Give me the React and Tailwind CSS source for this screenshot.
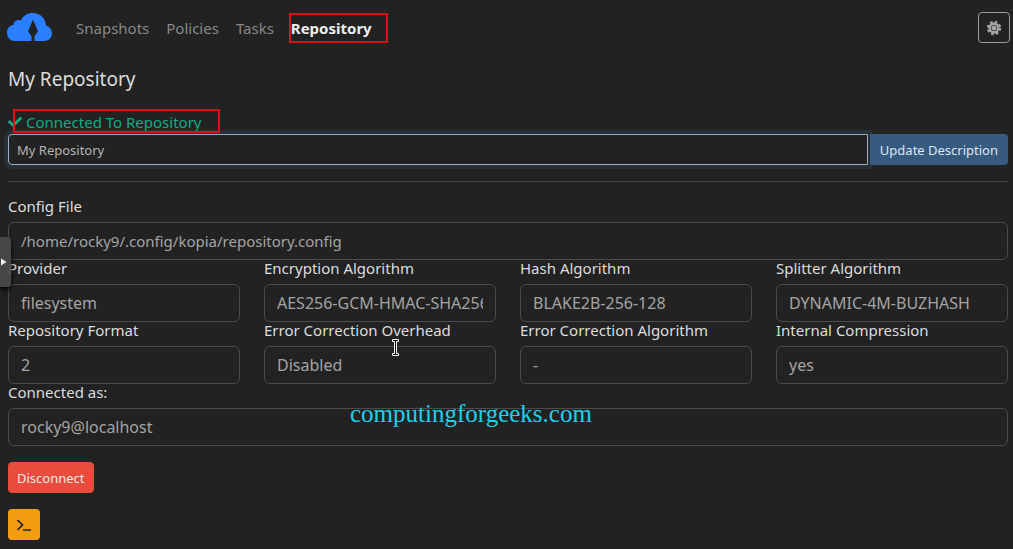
import { FaCheck } from "react-icons/fa";

const navLinks = ["Snapshots", "Policies", "Tasks"];

const details = [
  { id: "provider", label: "Provider", value: "filesystem" },
  { id: "encryption", label: "Encryption Algorithm", value: "AES256-GCM-HMAC-SHA256" },
  { id: "hash", label: "Hash Algorithm", value: "BLAKE2B-256-128" },
  { id: "splitter", label: "Splitter Algorithm", value: "DYNAMIC-4M-BUZHASH" },
  { id: "format", label: "Repository Format", value: "2" },
  { id: "eccOverhead", label: "Error Correction Overhead", value: "Disabled" },
  { id: "eccAlgorithm", label: "Error Correction Algorithm", value: "-" },
  { id: "compression", label: "Internal Compression", value: "yes" },
];

function Logo() {
  return (
    <svg viewBox="0 0 45 29" className="h-[29px] w-[45px]" aria-hidden="true">
      <path
        fill="#2a7fff"
        d="M8 28C3.500 28 0 24.500 0 19.500C0 15.500 2.500 12.500 6.500 12C6.500 8.500 10 6 14 7.500C16 2.500 20.500 0 26 0C33 0 38.500 5 39 12.500C42.500 13.500 45 16.500 45 20.500C45 25 41.500 28 37 28Z"
      />
      <path fill="#222222" d="M26 6.500L31 18.500L27.500 23V29H24.500V23L21 18.500Z" />
    </svg>
  );
}

function GearIcon() {
  return (
    <svg viewBox="0 0 16 16" className="h-4 w-4" fill="none" stroke="#a3a3a3" aria-hidden="true">
      <circle cx="8" cy="8" r="5.900" strokeWidth="2.600" strokeDasharray="2.600 2.034" />
      <circle cx="8" cy="8" r="4.300" strokeWidth="2.400" />
      <circle cx="8" cy="8" r="2.500" fill="#a3a3a3" stroke="none" />
    </svg>
  );
}

function Field({ id, label, value, inputSize = "text-base" }) {
  return (
    <div className="min-w-0">
      <label htmlFor={id} className="mb-2 block leading-4">
        {label}
      </label>
      <input
        id={id}
        type="text"
        readOnly
        defaultValue={value}
        className={`block h-[38px] w-full rounded-md border border-[#4b4b4b] bg-[#222222] px-3 text-[#a4a4a4] outline-none ${inputSize}`}
      />
    </div>
  );
}

function App() {
  return (
    <div className="relative min-h-screen bg-[#222222] pr-[5px] pb-2 pl-2 font-['Noto_Sans',sans-serif] text-[15px] leading-6 text-[#dddddd]">
      <nav className="-mr-[2px] -ml-px flex items-center pt-3">
        <a href="#home" aria-label="Home">
          <Logo />
        </a>
        <div className="ml-6 flex gap-[17px] text-[#888888]">
          {navLinks.map((name) => (
            <a key={name} href={`#${name.toLowerCase()}`}>
              {name}
            </a>
          ))}
          <a href="#repository" aria-current="page" className="relative font-bold text-[#eeeeee]">
            Repository
            <span className="absolute -inset-y-[3px] -right-4 -left-[2px] border-2 border-[#d81416]" />
          </a>
        </div>
        <button
          type="button"
          aria-label="Preferences"
          className="ml-auto flex h-[31px] w-8 items-center justify-center rounded border border-[#9a9a9a]"
        >
          <GearIcon />
        </button>
      </nav>

      <main>
        <h1 className="mt-5 text-[19px] leading-8">My Repository</h1>

        <div className="relative mt-[15px] flex h-6 items-center gap-1 text-[#0eac83]">
          <FaCheck className="h-[14px] w-[14px]" />
          <span>Connected To Repository</span>
          <span className="absolute -top-px left-[5px] h-6 w-[207px] border-2 border-[#d81416]" />
        </div>

        <div className="flex gap-[2px] text-[13px]">
          <input
            type="text"
            aria-label="Repository description"
            defaultValue="My Repository"
            className="h-[31px] min-w-0 flex-1 rounded-l border border-[#9badbf] bg-[#222222] px-2 text-[#b5b5b5] ring-4 ring-[#375a7f]/25 outline-none"
          />
          <button type="button" className="relative h-[31px] rounded-r bg-[#375a7f] px-[10px] text-[#dce8f5]">
            Update Description
          </button>
        </div>

        <hr className="my-4 border-[#444444]" />

        <Field
          id="configFile"
          label="Config File"
          value="/home/rocky9/.config/kopia/repository.config"
          inputSize="text-[15px]"
        />
        <div className="grid grid-cols-4 gap-x-6">
          {details.map((item) => (
            <Field key={item.id} {...item} />
          ))}
        </div>
        <Field id="connectedAs" label="Connected as:" value="rocky9@localhost" />

        <button
          type="button"
          className="mt-4 block h-[31px] rounded border border-[#e74c3c] bg-[#e74c3c] px-2 text-[13px] text-[#fbe6e3]"
        >
          Disconnect
        </button>
        <button
          type="button"
          aria-label="Show terminal commands"
          className="mt-4 flex h-[31px] w-8 items-center justify-center rounded bg-[#f39c12]"
        >
          <svg viewBox="0 0 16 14" className="h-[14px] w-4" fill="none" stroke="#222222" strokeWidth="1.700" aria-hidden="true">
            <path d="M1.500 2L6.500 7L1.500 12M7 12H15" />
          </svg>
        </button>
      </main>

      {/* Sidebar handle */}
      <button
        type="button"
        aria-label="Open sidebar"
        className="absolute top-[237px] left-0 flex h-[50px] w-[11px] items-center rounded-r bg-[#4a4a4a]/90 shadow-md shadow-black"
      >
        <svg viewBox="0 0 6 8" className="ml-px h-2 w-[6px]" fill="#eeeeee" aria-hidden="true">
          <path d="M0 0.500L5.500 4L0 7.500Z" />
        </svg>
      </button>

      {/* Mouse pointer */}
      <svg viewBox="0 0 9 19" className="absolute top-[338px] left-[391px] h-[19px] w-[9px]" aria-hidden="true">
        <path
          fill="#111111"
          stroke="#f5f5f5"
          d="M1.500 1.500H7.500V3.500H5.500V15.500H7.500V17.500H1.500V15.500H3.500V3.500H1.500Z"
        />
      </svg>

      <span className="pointer-events-none absolute top-[396px] left-[350px] font-['Liberation_Serif',serif] text-[25px] leading-9 text-[#1fd0ee]">
        computingforgeeks.com
      </span>
    </div>
  );
}

export default App;
